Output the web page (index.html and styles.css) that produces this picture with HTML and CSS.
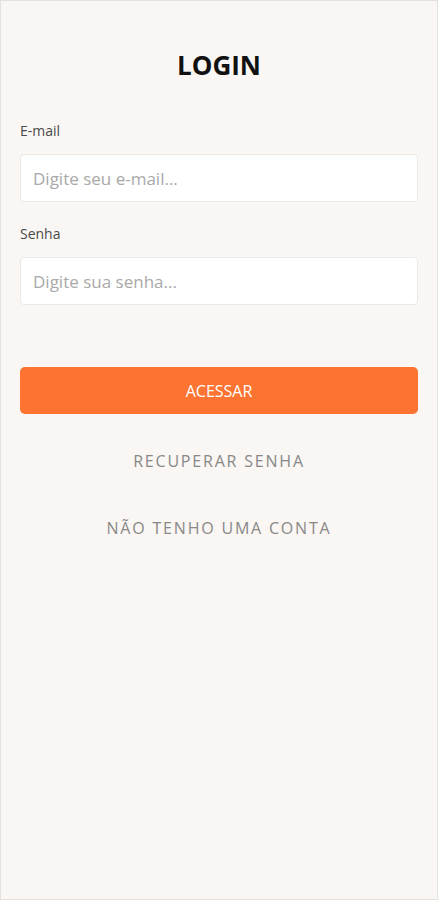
FILE: index.html
```html
<!DOCTYPE html>
<html lang="pt-BR">
<head>
    <meta charset="UTF-8">
    <meta name="viewport" content="width=device-width, initial-scale=1.0">
    <title>Login</title>
    <link rel="stylesheet" href="styles.css">
</head>
<body>
    <div class="screen">
        <h1 class="title">LOGIN</h1>

        <form class="login-form" onsubmit="return false;">
            <label class="field-label" for="email">E-mail</label>
            <input class="field-input" type="text" id="email" placeholder="Digite seu e-mail...">

            <label class="field-label" for="senha">Senha</label>
            <input class="field-input" type="password" id="senha" placeholder="Digite sua senha...">

            <button class="btn-primary" type="submit">ACESSAR</button>
        </form>

        <a class="link" href="#">RECUPERAR SENHA</a>
        <a class="link" href="#">NÃO TENHO UMA CONTA</a>
    </div>
</body>
</html>
```

FILE: styles.css
```css
/* General Styles */
html, body {
    height: 100%;
}
body {
    margin: 0;
    padding: 0;
    font-family: "Open Sans", "Noto Sans", sans-serif;
    background-color: #f9f6f3;
}

.screen {
    box-sizing: border-box;
    height: 100%;
    border: 1px solid #e4e2df;
    padding: 0 19px;
    display: flex;
    flex-direction: column;
}

.title {
    margin: 44px 0 0;
    text-align: center;
    font-size: 26px;
    font-weight: 700;
    color: #111;
    line-height: 40px;
}

/* Form */
.login-form {
    display: flex;
    flex-direction: column;
    margin-top: 36px;
}
.field-label {
    font-size: 14px;
    color: #4a4a4a;
    line-height: 20px;
    margin-bottom: 13px;
}
.field-input {
    box-sizing: border-box;
    height: 48px;
    padding: 0 12px;
    margin-bottom: 22px;
    border: 1px solid #ebe9e6;
    border-radius: 4px;
    background-color: #fff;
    font-family: inherit;
    font-size: 17px;
    color: #333;
    outline: none;
}
.field-input::placeholder {
    color: #a9a9a9;
}

.btn-primary {
    height: 47px;
    margin-top: 40px;
    border: none;
    border-radius: 5px;
    background-color: #fd7331;
    color: #fff;
    font-family: inherit;
    font-size: 16px;
    cursor: pointer;
}

/* Links */
.link {
    text-align: center;
    color: #888;
    font-size: 16px;
    letter-spacing: 1.8px;
    text-decoration: none;
    line-height: 20px;
}
.link:first-of-type {
    margin-top: 37px;
}
.link + .link {
    margin-top: 47px;
}
```
